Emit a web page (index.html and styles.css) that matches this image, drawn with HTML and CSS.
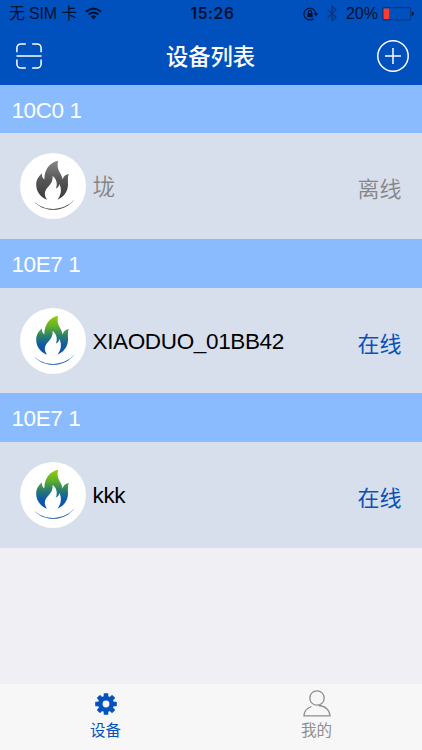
FILE: index.html
```html
<!DOCTYPE html>
<html lang="zh-CN">
<head>
  <meta charset="UTF-8">
  <meta name="viewport" content="width=device-width, initial-scale=1.0">
  <title>设备列表</title>
  <link rel="stylesheet" href="styles.css">
</head>
<body>
  <!-- shared flame logo -->
  <svg class="defs" width="0" height="0">
    <defs>
      <linearGradient id="on" gradientUnits="userSpaceOnUse" x1="0" y1="8" x2="0" y2="47">
        <stop offset="0" stop-color="#8ed000"/>
        <stop offset=".28" stop-color="#5fae2c"/>
        <stop offset=".5" stop-color="#2c8069"/>
        <stop offset=".75" stop-color="#0f58a8"/>
        <stop offset="1" stop-color="#0c50b0"/>
      </linearGradient>
      <linearGradient id="off" gradientUnits="userSpaceOnUse" x1="0" y1="8" x2="0" y2="47">
        <stop offset="0" stop-color="#858585"/>
        <stop offset=".5" stop-color="#555"/>
        <stop offset="1" stop-color="#3a3a3a"/>
      </linearGradient>
      <symbol id="flame" viewBox="0 0 66 66">
        <path d="M38 7.700C31 9.500 24.500 14.500 24.300 26.500C22.500 25 21.700 23.500 22 20.500C18.500 23 16.200 27 16.200 31.500C16.200 38 19.500 43.500 27 46.700C23.500 41.500 24.500 37.500 28.500 33.500C31.500 30 33 27.500 32.600 23C36 25.500 38 30 36 35.500C38 34.500 39 33 39.300 31C41 34 42.500 40.500 37.500 46.700C45 43 48 38 48 31C48 27.500 47.500 25 48.700 21C45.500 21.500 43.300 23.500 42.600 26.500C41.500 19 36 18 38 7.700Z"/>
        <path d="M14 48.500C24 59.700 44 60.200 55 46C43.500 58.700 25 58.900 14 48.500Z"/>
      </symbol>
    </defs>
  </svg>

  <header class="header">
    <div class="status">
      <div class="carrier">
        <span>无 SIM 卡</span>
        <svg width="17" height="13" viewBox="0 0 17 13" fill="none" stroke="#001030" stroke-width="2">
          <path d="M1 4.800Q8.500-1.800 16 4.800M3.600 7.600Q8.500 3.300 13.400 7.600"/>
          <path d="M5.600 9.400Q8.500 7 11.400 9.400L8.500 12.500Z" fill="#001030" stroke="none"/>
        </svg>
      </div>
      <b class="clock">15:26</b>
      <div class="indicators">
        <svg width="16" height="14" viewBox="0 0 16 14" fill="none" stroke="#001030" stroke-width="1.100">
          <path d="M10.500 11.800A5.900 5.900 0 1 1 12.800 7"/>
          <path d="M10.600 6.300H15.400L13 9.200Z" fill="#001030" stroke="none"/>
          <rect x="4.400" y="6.200" width="5.200" height="4" fill="#001030" stroke="none"/>
          <path d="M5.400 6.500V5A1.600 1.600 0 0 1 8.600 5V6.500"/>
        </svg>
        <svg class="bluetooth" width="10" height="17" viewBox="0 0 10 17" fill="none" stroke="#06357f" stroke-width="1.300">
          <path d="M.6 4.500L9 12L5 15.700V1.300L9 5L.6 12.500"/>
        </svg>
        <span class="percent">20%</span>
        <svg width="32" height="14" viewBox="0 0 32 14">
          <rect x=".6" y=".6" width="28" height="12.400" rx="2" fill="none" stroke="#06357f" stroke-width="1.100"/>
          <rect x="1.600" y="1.600" width="5.600" height="10.400" rx="1" fill="#ff3b30"/>
          <path d="M29.800 4.500Q31.800 5 31.800 6.800T29.800 9.100Z" fill="#001030"/>
        </svg>
      </div>
    </div>
    <nav class="nav">
      <svg width="26" height="26" viewBox="0 0 26 26" fill="none" stroke="#fff" stroke-width="1.500">
        <path d="M.9 9.200V4.900A4 4 0 0 1 4.900.9H9.800M16.200.9H21.100A4 4 0 0 1 25.100 4.900V9.200M.9 16.500V21.100A4 4 0 0 0 4.900 25.100H9.800M16.200 25.100H21.100A4 4 0 0 0 25.100 21.100V16.500M.5 13H25.500"/>
      </svg>
      <h1>设备列表</h1>
      <svg width="32" height="32" viewBox="0 0 32 32" fill="none" stroke="#fff" stroke-width="1.500">
        <circle cx="16" cy="16" r="15.200"/>
        <path d="M8 16H24M16 8V24"/>
      </svg>
    </nav>
  </header>

  <main class="list">
    <section class="group">
      <h2>10C0 1</h2>
      <div class="device offline">
        <span class="avatar"><svg width="66" height="66" fill="url(#off)"><use href="#flame"/></svg></span>
        <span class="name">垅</span>
        <span class="state">离线</span>
      </div>
    </section>
    <section class="group">
      <h2>10E7 1</h2>
      <div class="device">
        <span class="avatar"><svg width="66" height="66" fill="url(#on)"><use href="#flame"/></svg></span>
        <span class="name">XIAODUO_01BB42</span>
        <span class="state">在线</span>
      </div>
    </section>
    <section class="group">
      <h2>10E7 1</h2>
      <div class="device">
        <span class="avatar"><svg width="66" height="66" fill="url(#on)"><use href="#flame"/></svg></span>
        <span class="name">kkk</span>
        <span class="state">在线</span>
      </div>
    </section>
  </main>

  <footer class="tabs">
    <div class="tab active">
      <svg width="22" height="22" viewBox="-11 -11 22 22" fill="#0452bd">
        <g id="teeth">
          <rect x="-2.300" y="-10.800" width="4.600" height="21.600" rx=".6"/>
          <rect x="-10.800" y="-2.300" width="21.600" height="4.600" rx=".6"/>
        </g>
        <use href="#teeth" transform="rotate(45)"/>
        <circle r="8"/>
        <circle r="3.400" fill="#f7f7f7"/>
      </svg>
      <span>设备</span>
    </div>
    <div class="tab">
      <svg width="28" height="27" viewBox="0 0 28 27" fill="none" stroke="#8e8e8e" stroke-width="1.300">
        <circle cx="14" cy="8" r="7.200"/>
        <path d="M8.500 16.500C4 18 1.200 21.500 1 25.800H27C26.700 20 22 15.700 15.500 15.500"/>
      </svg>
      <span>我的</span>
    </div>
  </footer>
</body>
</html>
```
FILE: styles.css
```css
*{ box-sizing:border-box; }
body,h1,h2{ margin:0; padding:0; }
svg{ display:block; flex:none; }
body{
  height:750px; display:flex; flex-direction:column; overflow:hidden;
  background:#efeff4; color:#000;
  font-family:"Liberation Sans","Noto Sans CJK SC",sans-serif;
}
.defs{ position:absolute; }

.header{ height:84.5px; background:#0051bd; flex:none; }
.status{
  height:28px; padding:0 8px 0 9px; display:grid; grid-template-columns:1fr auto 1fr;
  align-items:center; color:#001030; font-size:16px; line-height:28px;
}
.carrier{ display:flex; align-items:center; gap:8px; }
.carrier svg{ margin-top:-2px; }
.carrier span{ letter-spacing:-0.2px; }
.clock{ padding-left:2px; font-family:Inter,sans-serif; font-size:15.5px; font-weight:600; letter-spacing:0.6px; }
.indicators{ display:flex; align-items:center; justify-content:flex-end; }
.indicators>svg{ margin-top:-1px; }
.indicators>svg:first-child{ margin-right:8px; }
.bluetooth{ margin-right:9px; }
.percent{ margin-right:4px; }
.nav{
  height:56px; padding:0 13px 0 16px; display:flex; align-items:center;
  justify-content:space-between; color:#fff;
}
.nav h1{ padding:3px 0 0 2px; font-size:22.3px; font-weight:500; line-height:32px; }

.group h2{
  height:48.9px; padding-left:11.5px; background:#8abbff; color:#fff;
  font-size:22.5px; font-weight:400; line-height:52px; letter-spacing:-0.4px;
}
.device{
  height:105.5px; padding:0 20.5px 0 20px; display:flex; align-items:center;
  background:#d8dfec;
}
.avatar{ width:66px; height:66px; border-radius:50%; background:#fff; }
.name{ margin-left:6.5px; padding-top:2px; flex:1; font-size:22.5px; line-height:32px; letter-spacing:-0.35px; }
.state{ padding-top:8px; color:#0c51b8; font-size:22px; line-height:32px; }
.offline .name,.offline .state{ color:#858585; font-weight:350; }
.offline .name{ padding-top:3px; }

.tabs{ height:66px; margin-top:auto; display:flex; background:#f7f7f7; flex:none; }
.tab{
  flex:1; padding-top:6px; display:flex; flex-direction:column; align-items:center;
  color:#8e8e8e; font-size:15.5px; line-height:22px;
}
.tab svg{ margin-bottom:3px; }
.tab.active{ padding-top:9px; color:#0452bd; }
.tab.active svg{ margin-bottom:5px; }
```
